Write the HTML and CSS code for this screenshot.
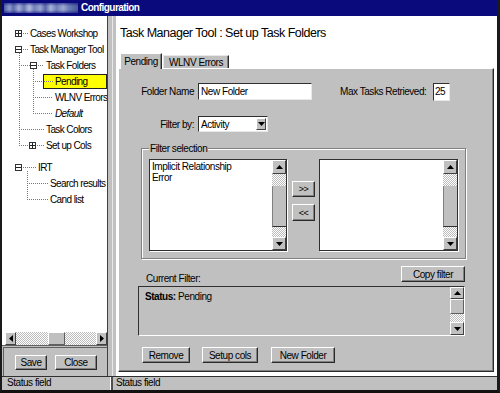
FILE: index.html
```html
<!DOCTYPE html>
<html>
<head>
<meta charset="utf-8">
<link rel="stylesheet" href="styles.css">
</head>
<body>
<div class="window">
  <div class="titlebar"><span class="blur"></span><span class="title">Configuration</span></div>
  <div class="main">
    <div class="left">
      <div class="tree">
        <div class="node root"><span class="exp plus"></span><span class="hl w5"></span><span class="txt">Cases Workshop</span></div>
        <div class="node root"><span class="exp"></span><span class="hl w5"></span><span class="txt">Task Manager Tool</span></div>
        <div class="kids k1">
          <div class="node"><span class="hl w11"></span><span class="exp"></span><span class="hl w6"></span><span class="txt">Task Folders</span></div>
          <div class="kids k2">
            <div class="node"><span class="hl w10"></span><span class="sel"><span class="hl w9"></span><span class="txt">Pending</span></span></div>
            <div class="node"><span class="hl w20"></span><span class="txt">WLNV Errors</span></div>
            <div class="node"><span class="hl w20"></span><span class="txt it">Default</span></div>
          </div>
          <div class="node"><span class="hl w25"></span><span class="txt">Task Colors</span></div>
          <div class="node"><span class="hl w10"></span><span class="exp plus"></span><span class="hl w7"></span><span class="txt">Set up Cols</span></div>
        </div>
        <div class="node root irt"><span class="exp"></span><span class="hl w13"></span><span class="txt">IRT</span></div>
        <div class="kids k3">
          <div class="node"><span class="hl w21"></span><span class="txt">Search results</span></div>
          <div class="node"><span class="hl w21"></span><span class="txt">Cand list</span></div>
        </div>
      </div>
      <div class="hscroll">
        <div class="sbtn hbtn"><svg width="4" height="7" viewBox="0 0 4 7"><path d="M4 0L4 7L0 3.5Z"/></svg></div>
        <div class="htrack dither"><div class="hthumb"></div></div>
        <div class="sbtn hbtn"><svg width="4" height="7" viewBox="0 0 4 7"><path d="M0 0L4 3.5L0 7Z"/></svg></div>
      </div>
      <div class="leftbtns">
        <div class="frame">
          <div class="btn b-save">Save</div>
          <div class="btn b-close">Close</div>
        </div>
      </div>
    </div>
    <div class="splitter"></div>
    <div class="right">
      <div class="heading">Task Manager Tool : Set up Task Folders</div>
      <div class="tabs">
        <div class="tab active">Pending</div>
        <div class="tab">WLNV Errors</div>
      </div>
      <div class="panel">
        <div class="row r1">
          <span class="lbl">Folder Name</span>
          <div class="tf tf-name">New Folder</div>
          <span class="lbl2">Max Tasks Retrieved:</span>
          <div class="tf tf-max">25</div>
        </div>
        <div class="row r2">
          <span class="lbl">Filter by:</span>
          <div class="combo">
            <span class="combo-txt">Activity</span>
            <span class="combo-btn"><svg width="7" height="4" viewBox="0 0 7 4"><path d="M0 0L7 0L3.5 4Z"/></svg></span>
          </div>
        </div>
        <div class="group">
          <div class="group-title">Filter selection</div>
          <div class="group-body">
            <div class="list">
              <div class="list-items">
                <div>Implicit Relationship</div>
                <div>Error</div>
              </div>
              <div class="vscroll">
                <div class="sbtn vbtn-up"><svg width="7" height="4" viewBox="0 0 7 4"><path d="M0 4L3.5 0L7 4Z"/></svg></div>
                <div class="dither d-top"></div>
                <div class="vthumb"></div>
                <div class="dither d-bot"></div>
                <div class="sbtn vbtn-down"><svg width="7" height="4" viewBox="0 0 7 4"><path d="M0 0L7 0L3.5 4Z"/></svg></div>
              </div>
            </div>
            <div class="movebtns">
              <div class="btn mv mv1">&gt;&gt;</div>
              <div class="btn mv mv2">&lt;&lt;</div>
            </div>
            <div class="list list-r">
              <div class="list-items"></div>
              <div class="vscroll">
                <div class="sbtn vbtn-up"><svg width="7" height="4" viewBox="0 0 7 4"><path d="M0 4L3.5 0L7 4Z"/></svg></div>
                <div class="dither d-top"></div>
                <div class="vthumb"></div>
                <div class="dither d-bot"></div>
                <div class="sbtn vbtn-down"><svg width="7" height="4" viewBox="0 0 7 4"><path d="M0 0L7 0L3.5 4Z"/></svg></div>
              </div>
            </div>
          </div>
        </div>
        <div class="row r-copy">
          <span class="cf-label">Current Filter:</span>
          <div class="btn b-copy">Copy filter</div>
        </div>
        <div class="curbox">
          <div class="cur-text"><b>Status:</b> Pending</div>
          <div class="vscroll vs2">
            <div class="sbtn vbtn-up2"><svg width="7" height="4" viewBox="0 0 7 4"><path d="M0 4L3.5 0L7 4Z"/></svg></div>
            <div class="vthumb2"></div>
            <div class="dither d-mid"></div>
            <div class="sbtn vbtn-down2"><svg width="7" height="4" viewBox="0 0 7 4"><path d="M0 0L7 0L3.5 4Z"/></svg></div>
          </div>
        </div>
        <div class="row r-btns">
          <div class="btn b-remove">Remove</div>
          <div class="btn b-setup">Setup cols</div>
          <div class="btn b-new">New Folder</div>
        </div>
      </div>
    </div>
  </div>
  <div class="status">
    <div class="st-left">Status field</div>
    <div class="st-sep"></div>
    <div class="st-right">Status field</div>
  </div>
</div>
</body>
</html>
```

FILE: styles.css
```css
* { box-sizing: border-box; }

html, body {
  margin: 0;
  padding: 0;
  background: #d8d8d8;
}

body {
  font-family: "Liberation Sans", Arial, sans-serif;
  font-size: 10px;
  letter-spacing: -0.45px;
  color: #000;
}

.window {
  width: 500px;
  height: 393px;
  background: #fff;
  border-left: 2px solid #1a1a1a;
  border-right: 3px solid #1a1a1a;
  border-bottom: 3px solid #111;
  display: flex;
  flex-direction: column;
  overflow: hidden;
}

/* Title bar */
.titlebar {
  height: 16px;
  background: #0a0a7c;
  display: flex;
  align-items: center;
  flex: none;
}

.blur {
  width: 74px;
  height: 10px;
  margin-left: 2px;
  background:
    linear-gradient(180deg, rgba(10,10,124,0.55) 0, rgba(10,10,124,0) 30%, rgba(10,10,124,0) 70%, rgba(10,10,124,0.55) 100%),
    linear-gradient(90deg, #4c5ca0 0, #8e9ccc 7%, #5c6cac 13%, #a4aed6 20%, #6878b4 27%, #b4bcdc 34%, #7282ba 41%, #98a4d0 49%, #5868a8 56%, #a8b2d8 63%, #7080b8 71%, #9ca8d2 80%, #6a7ab2 88%, #4a5a9c 100%);
}

.title {
  margin-left: 3px;
  color: #fff;
  font-weight: bold;
  font-size: 10px;
  letter-spacing: -0.55px;
  line-height: 12px;
}

/* Main */
.main {
  height: 360px;
  display: flex;
  flex: none;
}

.left {
  width: 105px;
  display: flex;
  flex-direction: column;
  flex: none;
}

.tree {
  flex: 1;
  background: #fff;
  padding-top: 9px;
  overflow: hidden;
  letter-spacing: -0.6px;
}

.node {
  display: flex;
  align-items: center;
  height: 16px;
  white-space: nowrap;
}

.node.root { padding-left: 13px; }
.node.irt { margin-top: 6px; }

.exp {
  width: 7px;
  height: 7px;
  flex: none;
  border: 1px solid #333;
  background: #fff linear-gradient(#222, #222) center / 5px 1px no-repeat;
}

.exp.plus {
  background:
    linear-gradient(#222, #222) center / 5px 1px no-repeat,
    linear-gradient(#222, #222) center / 1px 5px no-repeat,
    #fff;
}

.hl {
  height: 1px;
  flex: none;
  background: repeating-linear-gradient(90deg, #7a7a7a 0 1px, transparent 1px 2px);
}

.exp + .hl { margin-left: 1px; }

.w5 { width: 5px; }
.w6 { width: 6px; }
.w7 { width: 7px; }
.w9 { width: 9px; }
.w10 { width: 10px; }
.w11 { width: 11px; }
.w13 { width: 13px; }
.w20 { width: 20px; }
.w21 { width: 21px; }
.w25 { width: 25px; }

.txt { margin-left: 2px; }
.it { font-style: italic; }

.kids {
  margin-top: -4px;
  padding-top: 4px;
  background: repeating-linear-gradient(180deg, #7a7a7a 0 1px, transparent 1px 2px) no-repeat 0 0 / 1px calc(100% - 8px);
}

.k1 { margin-left: 17px; }
.k2 { margin-left: 14px; }
.k3 { margin-left: 25px; }

.sel {
  flex: 1;
  display: flex;
  align-items: center;
  height: 15px;
  background: #ffff00;
  border: 1px solid #222;
}

/* scroll parts */
.dither {
  background: repeating-conic-gradient(#ffffff 0 25%, #bcbcbc 0 50%) 0 0 / 2px 2px;
}

.sbtn {
  background: #c0c0c0;
  border: 1px solid;
  border-color: #fff #404040 #404040 #fff;
  display: flex;
  align-items: center;
  justify-content: center;
  flex: none;
}

.sbtn svg { display: block; fill: #000; }

.hscroll {
  height: 13px;
  display: flex;
  background: #fff;
  padding-left: 3px;
  flex: none;
}

.hbtn { width: 11px; height: 13px; }

.htrack {
  flex: 1;
  display: flex;
}

.hthumb {
  width: 17px;
  margin-left: 32px;
  background: #c0c0c0;
  border: 1px solid;
  border-color: #fff #606060 #606060 #fff;
}

.leftbtns {
  height: 31px;
  background: #c0c0c0;
  border-top: 1px solid #606060;
  padding: 1px 0 0 1px;
  flex: none;
}

.frame {
  height: 100%;
  border-top: 1px solid #606060;
  border-left: 1px solid #606060;
  display: flex;
  align-items: flex-start;
  padding: 7px 0 0 11px;
}

/* Buttons */
.btn {
  background: #c0c0c0;
  border: 1px solid;
  border-color: #fff #2a2a2a #2a2a2a #fff;
  box-shadow: inset -1px -1px 0 #808080;
  display: flex;
  align-items: center;
  justify-content: center;
  white-space: nowrap;
  flex: none;
}

.b-save { width: 32px; height: 15px; }
.b-close { width: 42px; height: 15px; margin-left: 8px; }

.splitter {
  width: 9px;
  flex: none;
  background: #c0c0c0 linear-gradient(90deg, transparent 4px, #e8e8e8 4px 5px, transparent 5px);
  border-left: 1px solid #404040;
}

.right {
  flex: 1;
  display: flex;
  flex-direction: column;
  background: #fff;
}

.heading {
  height: 37px;
  padding: 10px 0 0 4px;
  font-size: 12.5px;
  letter-spacing: -0.5px;
  line-height: 15px;
  flex: none;
}

.tabs {
  height: 15px;
  display: flex;
  align-items: flex-end;
  padding-left: 4px;
  flex: none;
}

.tab {
  height: 13px;
  width: 66px;
  margin-left: 1px;
  background: #c0c0c0;
  border-top: 1px solid #e8e8e8;
  border-left: 1px solid #e8e8e8;
  border-right: 1px solid #2a2a2a;
  box-shadow: inset -1px 0 0 #808080;
  display: flex;
  align-items: center;
  justify-content: center;
  line-height: 11px;
}

.tab.active {
  width: 42px;
  height: 16px;
  margin-left: 0;
  margin-bottom: -1px;
  position: relative;
  border-color: #fff #2a2a2a #fff #fff;
}

.panel {
  flex: 1;
  margin: 0 3px 4px 2px;
  background: #c0c0c0;
  border: 1px solid;
  border-color: #fff #2a2a2a #2a2a2a #fff;
  box-shadow: inset -1px -1px 0 #808080;
  display: flex;
  flex-direction: column;
}

.row {
  display: flex;
  align-items: center;
  flex: none;
}

.r1 { margin: 14px 0 0 18px; height: 17px; }
.r2 { margin: 16px 0 0 18px; height: 16px; }

.lbl {
  width: 57px;
  margin-right: 4px;
  text-align: right;
}

.tf {
  background: #fff;
  border: 1px solid;
  border-color: #303030 #e8e8e8 #e8e8e8 #303030;
  display: flex;
  align-items: center;
  padding-left: 2px;
}

.tf-name { width: 114px; height: 17px; }

.lbl2 { width: 93px; margin-left: 28px; }

.tf-max { width: 17px; height: 18px; padding-left: 1px; }

.combo {
  width: 70px;
  height: 16px;
  background: #fff;
  border: 1px solid;
  border-color: #303030 #e8e8e8 #e8e8e8 #303030;
  display: flex;
  align-items: center;
  padding-left: 2px;
}

.combo-btn {
  margin-left: auto;
  margin-right: 1px;
  width: 10px;
  height: 12px;
  background: #c0c0c0;
  border: 1px solid;
  border-color: #fff #404040 #404040 #fff;
  display: flex;
  align-items: center;
  justify-content: center;
}

.combo-btn svg { display: block; fill: #000; }

.group {
  margin: 16px 0 0 22px;
  width: 325px;
  border: 1px solid #808080;
  box-shadow: inset 1px 1px 0 #fff, 1px 1px 0 #fff;
  flex: none;
}

.group-title {
  margin: -6px 0 0 7px;
  padding: 0 1px;
  width: max-content;
  background: #c0c0c0;
  line-height: 12px;
}

.group-body {
  display: flex;
  padding: 4px 7px 7px 7px;
}

.list {
  width: 138px;
  height: 92px;
  background: #fff;
  border: 1px solid #303030;
  box-shadow: 1px 1px 0 #fff;
  display: flex;
}

.list-r { width: 139px; margin-left: 4px; }

.list-items {
  flex: 1;
  padding: 1px 2px;
  line-height: 11px;
}

.vscroll {
  width: 14px;
  display: flex;
  flex-direction: column;
  flex: none;
}

.vbtn-up { height: 14px; }
.vbtn-down { height: 13px; }
.d-top { height: 12px; }
.d-bot { height: 10px; }

.vthumb {
  flex: 1;
  background: #c0c0c0;
  border-left: 1px solid #808080;
  border-bottom: 1px solid #303030;
}

.movebtns {
  width: 23px;
  margin-left: 5px;
  display: flex;
  flex-direction: column;
}

.mv { width: 23px; font-size: 9px; letter-spacing: -0.6px; }
.mv1 { margin-top: 22px; height: 16px; }
.mv2 { margin-top: 7px; height: 17px; }

.r-copy {
  margin: 7px 28px 0 27px;
  height: 16px;
  justify-content: space-between;
  align-items: flex-end;
}

.cf-label { line-height: 12px; margin-bottom: -3px; }

.b-copy { width: 64px; height: 16px; }

.curbox {
  margin: 4px 0 0 19px;
  width: 327px;
  height: 50px;
  background: #c0c0c0;
  border: 1px solid;
  border-color: #303030 #fff #fff #303030;
  display: flex;
  flex: none;
}

.cur-text {
  flex: 1;
  padding: 4px 6px;
  line-height: 12px;
}

.vbtn-up2 { height: 12px; }
.vthumb2 {
  height: 15px;
  background: #c0c0c0;
  border: 1px solid;
  border-color: #fff #606060 #606060 #fff;
}
.d-mid { flex: 1; }
.vbtn-down2 { height: 13px; }

.r-btns { margin: 11px 0 0 23px; height: 16px; }

.b-remove { width: 48px; height: 16px; }
.b-setup { width: 56px; height: 16px; margin-left: 12px; }
.b-new { width: 64px; height: 16px; margin-left: 13px; }

/* Status bar */
.status {
  height: 14px;
  display: flex;
  background: #c0c0c0;
  border-top: 1px solid #303030;
  flex: none;
}

.st-left {
  width: 108px;
  padding-left: 5px;
  line-height: 12px;
}

.st-sep {
  width: 3px;
  background: #505050;
  border-left: 1px solid #fff;
}

.st-right {
  flex: 1;
  padding-left: 3px;
  line-height: 12px;
}
```
